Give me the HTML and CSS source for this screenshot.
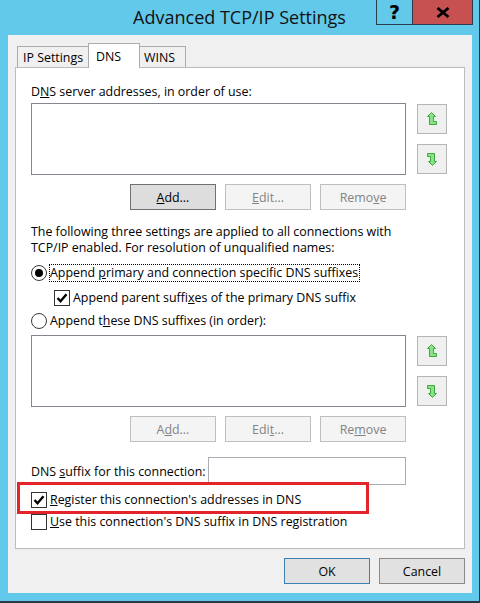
FILE: index.html
```html
<!DOCTYPE html>
<html>
<head>
<meta charset="utf-8">
<title>Advanced TCP/IP Settings</title>
<link rel="stylesheet" href="styles.css">
</head>
<body>
<div class="window">
  <div class="titlebar">
    <div class="spacer"></div>
    <div class="title">Advanced TCP/IP Settings</div>
    <div class="caption">
      <div class="cap help">?</div>
      <div class="cap close">
        <svg width="14" height="11" viewBox="0 0 14 11"><path d="M1.5 1 L12.5 10 M12.5 1 L1.5 10" stroke="#000" stroke-width="2.8" fill="none"/></svg>
      </div>
    </div>
  </div>
  <div class="client">
    <div class="tabs">
      <div class="tab t-ip">IP Settings</div>
      <div class="tab t-dns">DNS</div>
      <div class="tab t-wins">WINS</div>
    </div>
    <div class="panel">
      <div class="label">D<u>N</u>S server addresses, in order of use:</div>
      <div class="listrow">
        <div class="list"></div>
        <div class="arrows">
          <div class="abtn"><svg class="arr" width="10" height="14" viewBox="0 0 10 14"><polygon points="4.5,0.5 8.5,4.5 6.5,4.5 6.5,9.5 9.5,9.5 9.5,12.5 2.5,12.5 2.5,4.5 0.5,4.5" fill="#88e288" stroke="#3fa93f" stroke-width="1"/></svg></div>
          <div class="abtn"><svg class="arr down" width="10" height="14" viewBox="0 0 10 14"><polygon points="4.5,0.5 8.5,4.5 6.5,4.5 6.5,9.5 9.5,9.5 9.5,12.5 2.5,12.5 2.5,4.5 0.5,4.5" fill="#88e288" stroke="#3fa93f" stroke-width="1"/></svg></div>
        </div>
      </div>
      <div class="btnrow">
        <div class="btn focused"><u>A</u>dd...</div>
        <div class="btn disabled"><u>E</u>dit...</div>
        <div class="btn disabled">Remo<u>v</u>e</div>
      </div>
      <p class="para">The following three settings are applied to all connections with<br>TCP/IP enabled. For resolution of unqualified names:</p>
      <div class="opt r1"><span class="radio on"></span><span class="lbl focus">Append <u>p</u>rimary and connection specific DNS suffixes</span></div>
      <div class="opt c1"><span class="check"><svg width="14" height="14" viewBox="0 0 14 14"><path d="M2.5 7 L5.5 10.2 L11.5 3.2" stroke="#000" stroke-width="2.4" fill="none"/></svg></span><span class="lbl">Append parent suffi<u>x</u>es of the primary DNS suffix</span></div>
      <div class="opt r2"><span class="radio"></span><span class="lbl">Append t<u>h</u>ese DNS suffixes (in order):</span></div>
      <div class="listrow l2">
        <div class="list"></div>
        <div class="arrows">
          <div class="abtn"><svg class="arr" width="10" height="14" viewBox="0 0 10 14"><polygon points="4.5,0.5 8.5,4.5 6.5,4.5 6.5,9.5 9.5,9.5 9.5,12.5 2.5,12.5 2.5,4.5 0.5,4.5" fill="#88e288" stroke="#3fa93f" stroke-width="1"/></svg></div>
          <div class="abtn"><svg class="arr down" width="10" height="14" viewBox="0 0 10 14"><polygon points="4.5,0.5 8.5,4.5 6.5,4.5 6.5,9.5 9.5,9.5 9.5,12.5 2.5,12.5 2.5,4.5 0.5,4.5" fill="#88e288" stroke="#3fa93f" stroke-width="1"/></svg></div>
        </div>
      </div>
      <div class="btnrow">
        <div class="btn disabled">A<u>d</u>d...</div>
        <div class="btn disabled">Edi<u>t</u>...</div>
        <div class="btn disabled">Re<u>m</u>ove</div>
      </div>
      <div class="sfx">
        <span class="sfx-label">DNS <u>s</u>uffix for this connection:</span>
        <div class="textbox"></div>
      </div>
      <div class="opt reg"><span class="check"><svg width="14" height="14" viewBox="0 0 14 14"><path d="M2.5 7 L5.5 10.2 L11.5 3.2" stroke="#000" stroke-width="2.4" fill="none"/></svg></span><span class="lbl"><u>R</u>egister this connection's addresses in DNS</span></div>
      <div class="opt use"><span class="check"></span><span class="lbl"><u>U</u>se this connection's DNS suffix in DNS registration</span></div>
    </div>
    <div class="footer">
      <div class="btn ok">OK</div>
      <div class="btn cancel">Cancel</div>
    </div>
  </div>
  <div class="highlight"></div>
</div>
</body>
</html>
```

FILE: styles.css
```css
* { box-sizing: border-box; }
html, body { margin: 0; padding: 0; }
body {
  width: 480px;
  height: 603px;
  overflow: hidden;
  font-family: "Open Sans", "Noto Sans", sans-serif;
  font-size: 12.4px;
  color: #000;
}
.window {
  position: relative;
  width: 480px;
  height: 603px;
  background: #62c9ea;
  border-right: 1px solid #2b3944;
  border-bottom: 2px solid #2b3944;
  display: flex;
  flex-direction: column;
}
.titlebar {
  flex: none;
  height: 35px;
  display: grid;
  grid-template-columns: 1fr auto 1fr;
}
.title {
  font-size: 18px;
  line-height: 35px;
  color: #111;
  white-space: nowrap;
}
.caption {
  justify-self: end;
  align-self: start;
  display: flex;
  margin-right: 6px;
}
.cap {
  height: 25px;
  border: 1px solid #2b3b47;
  border-top: none;
  display: flex;
  align-items: center;
  justify-content: center;
}
.help {
  width: 37px;
  font: bold 19px "DejaVu Sans", sans-serif;
  color: #000;
}
.close {
  width: 60px;
  background: #c75050;
  border-left: none;
}
.client {
  flex: none;
  margin: 0 7px 0 8px;
  height: 558px;
  background: #f0f0f0;
  padding: 8px 7px 9px;
  display: flex;
  flex-direction: column;
}
.tabs {
  flex: none;
  height: 24px;
  display: flex;
  align-items: flex-end;
  padding-left: 2px;
}
.tab {
  height: 21px;
  border: 1px solid #acacac;
  border-bottom: none;
  background: #f0f0f0;
  display: flex;
  align-items: center;
  white-space: nowrap;
}
.t-ip { width: 72px; padding-left: 5px; }
.t-dns {
  width: 52px;
  height: 25px;
  margin: 0 0 -1px -1px;
  padding-left: 7px;
  background: #fff;
  position: relative;
  z-index: 1;
}
.t-wins { width: 47px; margin-left: -1px; padding-left: 4px; }
.panel {
  flex: none;
  height: 482px;
  background: #fff;
  border: 1px solid #bcbcbc;
  padding: 16px 17px 0 15px;
  display: flex;
  flex-direction: column;
}
.label { line-height: 16px; }
.listrow {
  display: flex;
  gap: 11px;
  margin-top: 3px;
  height: 72px;
}
.listrow.l2 { margin-top: 5px; }
.list {
  flex: 1;
  border: 1px solid #828790;
  background: #fff;
}
.arrows {
  width: 30px;
  display: flex;
  flex-direction: column;
  gap: 10px;
  padding-top: 1px;
}
.abtn {
  height: 30px;
  border: 1px solid #b5b5b5;
  background: #f0f0f0;
  display: flex;
  align-items: center;
  justify-content: center;
}
.arr.down { transform: rotate(180deg); }
.btnrow {
  display: flex;
  justify-content: flex-end;
  gap: 9px;
  margin-top: 9px;
  padding-right: 41px;
}
.btn {
  width: 86px;
  height: 26px;
  border: 1px solid #adadad;
  background: #e1e1e1;
  display: flex;
  align-items: center;
  justify-content: center;
  white-space: nowrap;
}
.btn.focused { border-color: #707070; background: #dddddd; }
.btn.disabled { border-color: #bfbfbf; background: #f4f4f4; color: #838383; }
.para { margin: 14px 0 0; line-height: 16px; }
.opt {
  display: flex;
  align-items: center;
  height: 18px;
  white-space: nowrap;
}
.r1 { margin-top: 8px; }
.c1 { margin-top: 7px; padding-left: 23px; }
.r2 { margin-top: 5px; }
.reg { margin-top: 6px; }
.use { margin-top: 4px; }
.radio {
  flex: none;
  width: 16px;
  height: 16px;
  border-radius: 50%;
  border: 1px solid #3a3a3a;
  background: #fff;
  display: flex;
  align-items: center;
  justify-content: center;
}
.radio.on::after {
  content: "";
  width: 8px;
  height: 8px;
  border-radius: 50%;
  background: #000;
}
.check {
  flex: none;
  width: 16px;
  height: 16px;
  border: 1px solid #333;
  background: #fff;
  display: flex;
  align-items: center;
  justify-content: center;
}
.lbl {
  margin-left: 2px;
  border: 1px solid transparent;
  padding-right: 1px;
  line-height: 16px;
}
.lbl.focus { border: 1px dotted #000; }
.sfx {
  display: flex;
  align-items: center;
  margin-top: 15px;
  height: 28px;
  padding-right: 41px;
}
.textbox {
  margin-left: auto;
  width: 198px;
  height: 28px;
  border: 1px solid #abadb3;
  background: #fff;
}
.footer {
  display: flex;
  justify-content: flex-end;
  gap: 9px;
  margin-top: 9px;
}
.btn.ok { border-color: #3c7fb1; }
.btn.cancel { border-color: #8a8a8a; }
.highlight {
  position: absolute;
  left: 17px;
  top: 482px;
  width: 352px;
  height: 32px;
  border: 3px solid #e3242b;
}
```
